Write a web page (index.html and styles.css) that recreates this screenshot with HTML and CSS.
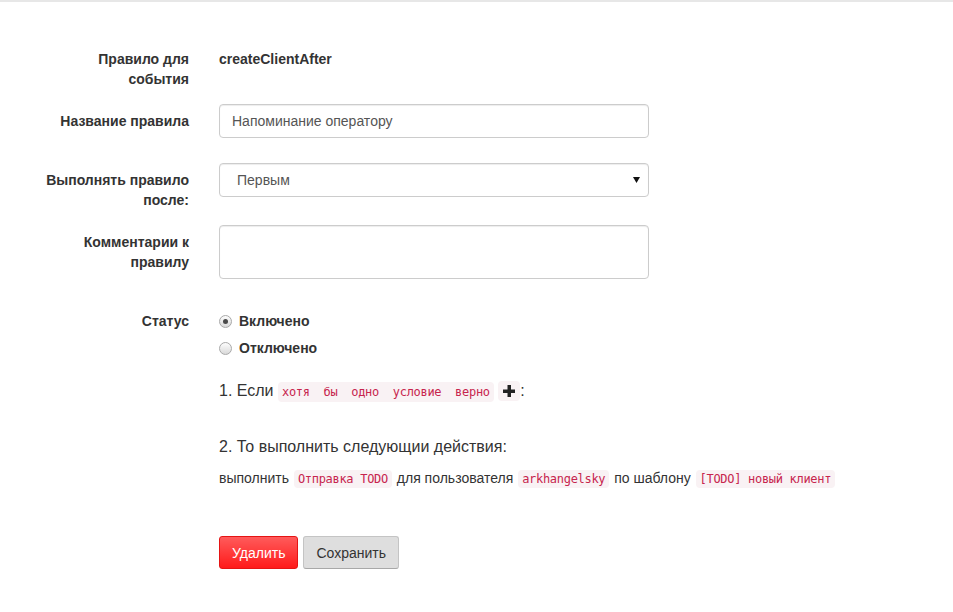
FILE: index.html
```html
<!DOCTYPE html>
<html lang="ru">
<head>
<meta charset="utf-8">
<title>Правило</title>
<link rel="stylesheet" href="styles.css">
</head>
<body>
<div class="topbar"></div>
<form class="form">
  <div class="group">
    <div class="label">Правило для события</div>
    <div class="control"><div class="static">createClientAfter</div></div>
  </div>
  <div class="group spaced">
    <div class="label">Название правила</div>
    <div class="control"><input class="input" type="text" value="Напоминание оператору"></div>
  </div>
  <div class="group">
    <div class="label">Выполнять правило после:</div>
    <div class="control">
      <div class="select"><span>Первым</span><svg class="caret" width="7" height="6" viewBox="0 0 7 6"><polygon points="0,0 7,0 3.5,6" fill="#111"/></svg></div>
    </div>
  </div>
  <div class="group spaced">
    <div class="label">Комментарии к правилу</div>
    <div class="control"><textarea class="input textarea" rows="2"></textarea></div>
  </div>
  <div class="group">
    <div class="label">Статус</div>
    <div class="control radios">
      <div class="radio"><span class="dot checked"></span>Включено</div>
      <div class="radio"><span class="dot"></span>Отключено</div>
    </div>
  </div>
  <div class="rules">
    <div class="heading step1">1. Если <code class="pre">хотя  бы  одно  условие  верно</code> <code class="plus"><svg width="12" height="12" viewBox="0 0 12 12"><rect x="4.5" y="0" width="3.5" height="12" fill="#222"/><rect x="0" y="4.5" width="12" height="3.5" fill="#222"/></svg></code>:</div>
    <div class="heading step2">2. То выполнить следующии действия:</div>
    <div class="action">выполнить <code>Отправка TODO</code> для пользователя <code>arkhangelsky</code> по шаблону <code>[TODO] новый клиент</code></div>
    <div class="buttons">
      <button type="button" class="btn danger">Удалить</button>
      <button type="button" class="btn default">Сохранить</button>
    </div>
  </div>
</form>
</body>
</html>
```
FILE: styles.css
```css
html, body {
  margin: 0;
  padding: 0;
  background: #fff;
}
body {
  font-family: "Liberation Sans", Arial, sans-serif;
  font-size: 14px;
  line-height: 20px;
  color: #333;
}
.topbar {
  height: 2px;
  background: #e7e7e7;
}
.form {
  padding-top: 40px;
}
.group {
  display: flex;
  align-items: flex-start;
  margin-bottom: 15px;
}
.group.spaced {
  margin-bottom: 25px;
}
.label {
  width: 152px;
  margin-left: 37px;
  margin-right: 30px;
  padding-top: 7px;
  text-align: right;
  font-weight: bold;
}
.control {
  width: 430px;
}
.static {
  padding-top: 7px;
  font-weight: bold;
}
.input {
  display: block;
  box-sizing: border-box;
  width: 430px;
  height: 34px;
  padding: 6px 12px;
  border: 1px solid #ccc;
  border-radius: 4px;
  box-shadow: inset 0 1px 1px rgba(0,0,0,.075);
  font-family: "Liberation Sans", Arial, sans-serif;
  font-size: 14px;
  line-height: 20px;
  color: #555;
  background: #fff;
  margin: 0;
  outline: none;
}
.textarea {
  height: 54px;
  resize: none;
}
.select {
  box-sizing: border-box;
  height: 34px;
  display: flex;
  align-items: center;
  justify-content: space-between;
  padding: 0 8px 0 17px;
  border: 1px solid #ccc;
  border-radius: 4px;
  box-shadow: inset 0 1px 1px rgba(0,0,0,.075);
  color: #555;
}
.caret {
  display: block;
}
.radios {
  display: flex;
  flex-direction: column;
  gap: 7px;
  padding-top: 7px;
}
.radio {
  display: flex;
  align-items: center;
  font-weight: bold;
  height: 20px;
}
.dot {
  box-sizing: border-box;
  width: 13px;
  height: 13px;
  border-radius: 50%;
  border: 1px solid #a9a9a9;
  background: linear-gradient(#fdfdfd, #d9d9d9);
  margin-right: 7px;
  display: flex;
  align-items: center;
  justify-content: center;
}
.dot.checked::after {
  content: "";
  width: 5px;
  height: 5px;
  border-radius: 50%;
  background: #4a4a4a;
}
.rules {
  margin-left: 219px;
}
.heading {
  font-size: 16px;
  line-height: 22px;
  color: #333;
}
.step1 {
  margin-top: 22px;
}
.step2 {
  margin-top: 33px;
}
.action {
  margin-top: 10px;
}
code {
  font-family: "DejaVu Sans Mono", "Liberation Mono", monospace;
  font-size: 12px;
  letter-spacing: -0.3px;
  padding: 2px 4px;
  color: #c7254e;
  background: #f9f2f4;
  border-radius: 4px;
}
.action code {
  margin: 0 1px;
}
.heading code {
  padding: 3px 4px;
}
code.pre {
  white-space: pre;
}
code.plus {
  display: inline-block;
  vertical-align: -5px;
  width: 22px;
  height: 20px;
  padding: 0;
  box-sizing: border-box;
  text-align: center;
}
code.plus svg {
  display: block;
  margin: 4px auto 0;
}
.buttons {
  display: flex;
  gap: 5px;
  margin-top: 47px;
}
.btn {
  box-sizing: border-box;
  height: 33px;
  padding: 6px 12px;
  font-family: "Liberation Sans", Arial, sans-serif;
  font-size: 14px;
  line-height: 20px;
  border-radius: 3px;
  cursor: pointer;
}
.danger {
  color: #fff;
  background: linear-gradient(#ff5b5b, #ff1a1a);
  border: 1px solid #e51414;
}
.default {
  color: #333;
  background: #dedede;
  border: 1px solid #c4c4c4;
  border-bottom-color: #a8a8a8;
}
```
